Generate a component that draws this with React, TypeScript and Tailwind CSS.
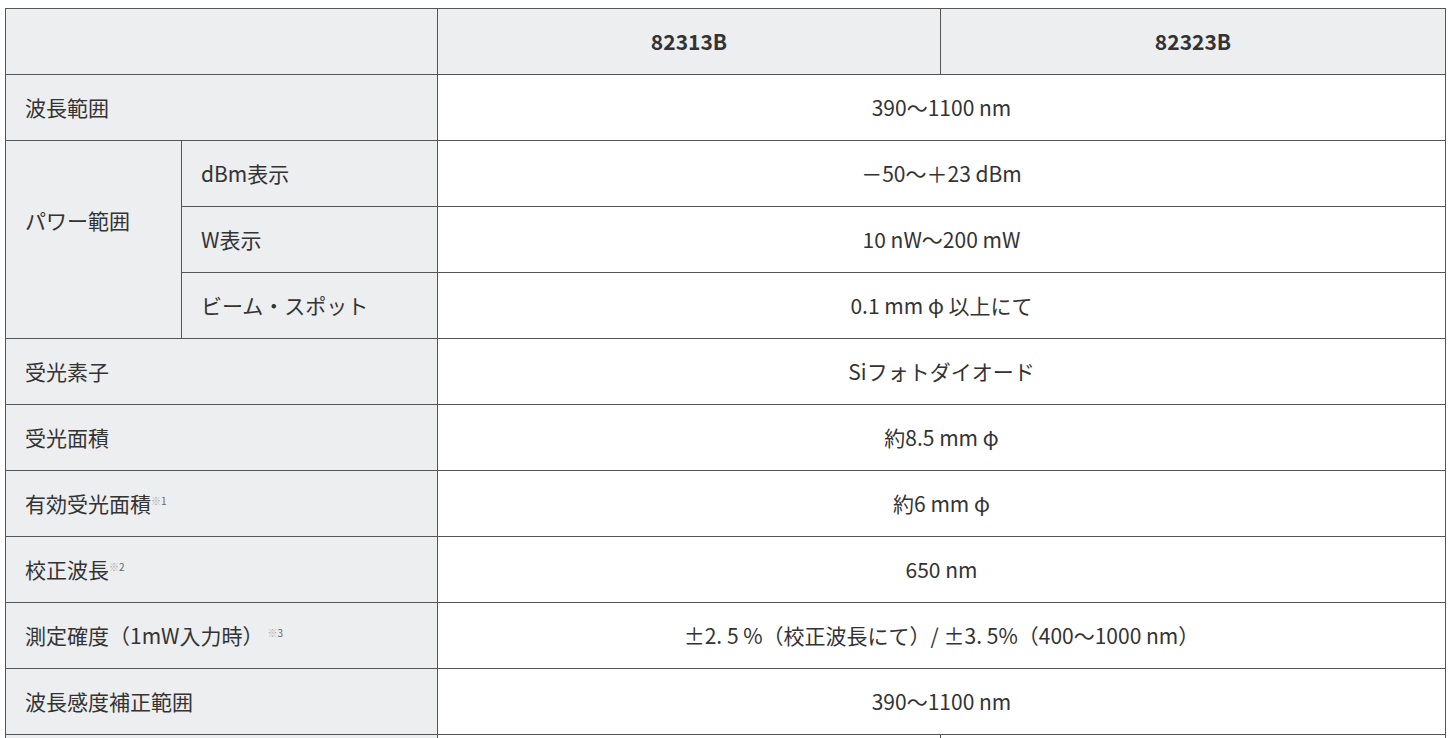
const font = { fontFamily: '"Noto Sans CJK JP", "Noto Sans", sans-serif' };

type Row = { label: React.ReactNode; value: string };

function Note({ n }: { n: string }) {
  return (
    <span className="relative top-[-7px] text-[10px]">
      <span className="text-[#aaa]">※</span>
      <span className="text-[#666]">{n}</span>
    </span>
  );
}

const th = 'border border-[#555] bg-[#edeef0] pl-[19px] pr-4 text-left font-normal';
const td = 'border border-[#555] bg-white px-5 text-center';

const simple: Row[] = [
  { label: '受光素子', value: 'Siフォトダイオード' },
  { label: '受光面積', value: '約8.5 mm φ' },
  { label: <>有効受光面積<Note n="1" /></>, value: '約6 mm φ' },
  { label: <>校正波長<Note n="2" /></>, value: '650 nm' },
  { label: <>測定確度（1mW入力時）<span className="ml-1" /><Note n="3" /></>, value: '±2. 5 %（校正波長にて）/ ±3. 5%（400〜1000 nm）' },
  { label: '波長感度補正範囲', value: '390〜1100 nm' },
];

export default function App() {
  return (
    <div className="min-h-screen bg-white pl-[5px] pt-[8px] text-[21px] text-[#333]" style={font}>
      <table className="w-[1440px] table-fixed border-collapse">
        <colgroup>
          <col className="w-[176px]" />
          <col className="w-[256px]" />
          <col className="w-[503px]" />
          <col className="w-[505px]" />
        </colgroup>
        <tbody>
          <tr className="h-[66px]">
            <th colSpan={2} className={th}></th>
            <th className="border border-[#555] bg-[#edeef0] text-center font-bold">82313B</th>
            <th className="border border-[#555] bg-[#edeef0] text-center font-bold">82323B</th>
          </tr>
          <tr className="h-[66px]">
            <th colSpan={2} className={th}>波長範囲</th>
            <td colSpan={2} className={td}>390〜1100 nm</td>
          </tr>
          <tr className="h-[66px]">
            <th rowSpan={3} className={`${th} pb-[38px]`}>パワー範囲</th>
            <th className={th}>dBm表示</th>
            <td colSpan={2} className={td}>－50〜＋23 dBm</td>
          </tr>
          <tr className="h-[66px]">
            <th className={th}>W表示</th>
            <td colSpan={2} className={td}>10 nW〜200 mW</td>
          </tr>
          <tr className="h-[66px]">
            <th className={th}>ビーム・スポット</th>
            <td colSpan={2} className={td}>0.1 mm φ 以上にて</td>
          </tr>
          {simple.map((r, i) => (
            <tr key={i} className="h-[66px]">
              <th colSpan={2} className={th}>{r.label}</th>
              <td colSpan={2} className={td}>{r.value}</td>
            </tr>
          ))}
          <tr className="h-[66px]">
            <th colSpan={2} className={th}></th>
            <td className={td}></td>
            <td className={td}></td>
          </tr>
        </tbody>
      </table>
    </div>
  );
}
